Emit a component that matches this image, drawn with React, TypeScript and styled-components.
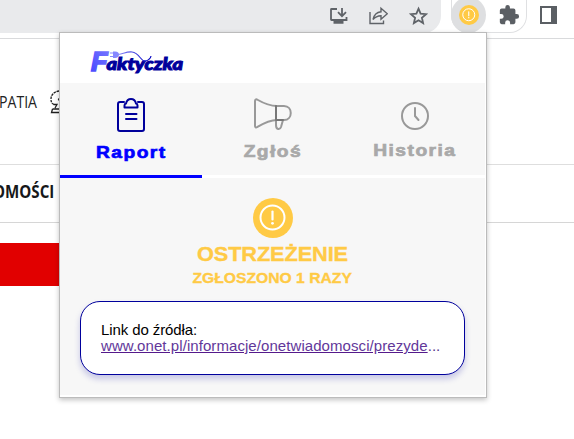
import React from "react";
import styled, { createGlobalStyle } from "styled-components";

const GlobalStyle = createGlobalStyle`
  *, *::before, *::after { box-sizing: border-box; }
  html, body { margin: 0; overflow: hidden; background: #fff; }
  body { font-family: "Liberation Sans", Arial, sans-serif; }
  svg { display: block; flex: none; }
`;

const Browser = styled.div`
  position: relative;
  width: 574px;
  height: 439px;
  overflow: hidden;
  background: #fff;
`;

const Toolbar = styled.header`
  display: flex;
  height: 39px;
  border-bottom: 1px solid #d9dadc;
`;

const AddressBar = styled.div`
  display: flex;
  align-items: flex-start;
  gap: 20px;
  width: 441px;
  height: 33px;
  padding: 6px 14px 0 328px;
  background: #e9eaec;
  border-bottom-right-radius: 17px;
`;

const Extensions = styled.div`
  display: flex;
  flex: none;
  width: 76px;
  height: 33px;
  margin-left: 10px;
  border: 1px solid #dfe0e2;
  border-top: 0;
  border-radius: 0 0 17px 17px;
`;

const ActiveExtension = styled.div`
  flex: none;
  width: 35px;
  height: 36px;
  margin: -3px 0 0 -1px;
  padding: 8px 0 0 7.5px;
  border-radius: 50%;
  background: #dedfe1;
`;

const PuzzleSlot = styled.div`
  padding: 4px 0 0 12px;
`;

const PanelToggle = styled.div`
  flex: none;
  width: 17px;
  height: 18px;
  margin: 6px 0 0 13px;
  border: 2px solid #5b5f64;
  border-right-width: 6px;
`;

const Page = styled.main`
  display: flex;
  flex-direction: column;
`;

const PageHeader = styled.div`
  display: flex;
  justify-content: space-between;
  width: 66px;
  height: 125px;
  padding-top: 51px;
`;

const PageLink = styled.span`
  margin-left: -1px;
  font: 400 17px/24px "Open Sans", sans-serif;
  color: #222;
  transform: scaleX(0.83);
  transform-origin: left;
`;

const PageNav = styled.nav`
  height: 59px;
  padding-top: 14px;
  border-top: 1px solid #dedede;
  border-bottom: 1px solid #d6d6d6;
`;

const NavLabel = styled.span`
  display: block;
  width: max-content;
  margin-left: -7px;
  font: 700 18px/24px "Open Sans", sans-serif;
  color: #17181a;
  transform: scaleX(0.84);
  transform-origin: left;
`;

const RedBanner = styled.div`
  height: 43px;
  width: 70px;
  margin-top: 20px;
  background: #e10000;
`;

const Popup = styled.section`
  position: absolute;
  left: 60px;
  top: 33px;
  width: 426px;
  height: 364px;
  background: #fff;
  box-shadow: 0 0 0 1px #bbb, 0 2px 5px 1px rgba(0, 0, 0, 0.24);
`;

const Brand = styled.div`
  height: 50px;
  padding: 10px 0 0 28px;
`;

const Tabs = styled.nav`
  display: grid;
  grid-template-columns: 142px 142px 141px;
  width: 425px;
  height: 95px;
  background: #f7f7f7;
`;

const Tab = styled.button<{ $active?: boolean; $pad: number; $gap: number }>`
  display: flex;
  flex-direction: column;
  align-items: center;
  gap: ${(p) => p.$gap}px;
  padding: ${(p) => p.$pad}px 0 0;
  border: 0;
  border-bottom: 3px solid ${(p) => (p.$active ? "#0000ff" : "#fff")};
  background: transparent;
  color: ${(p) => (p.$active ? "#0000ff" : "#a9a9a9")};
`;

const TabLabel = styled.span`
  font: 900 17px/20px "Liberation Sans", Arial, sans-serif;
  letter-spacing: 1.3px;
  transform: scaleX(1.13);
  -webkit-text-stroke: 0.7px currentColor;
`;

const Report = styled.div`
  display: flex;
  flex-direction: column;
  align-items: center;
  width: 425px;
  height: 217px;
  padding-top: 20px;
  background: #f7f7f7;
`;

const Verdict = styled.h1`
  margin: 4px 0 0;
  font: 700 20px/24px "Liberation Sans", Arial, sans-serif;
  letter-spacing: -0.1px;
  color: #ffca45;
  transform: scaleX(1.087);
  -webkit-text-stroke: 0.35px currentColor;
`;

const Count = styled.p`
  margin: 3px 0 0;
  font: 700 14px/18px "Liberation Sans", Arial, sans-serif;
  color: #ffca45;
  transform: scaleX(1.12);
  -webkit-text-stroke: 0.3px currentColor;
`;

const SourceCard = styled.div`
  width: 385px;
  height: 74px;
  margin-top: 14px;
  padding: 20px;
  border: 1px solid #00009c;
  border-radius: 20px;
  background: #fff;
  box-shadow: 0 4px 6px rgba(0, 0, 160, 0.2);
  font-size: 15px;
  line-height: 16px;
  color: #000;
`;

const SourceLabel = styled.div`
  letter-spacing: -0.1px;
`;

const SourceLink = styled.div`
  white-space: nowrap;
  letter-spacing: 0.07px;
  color: #56358c;
  a { color: #62379a; text-decoration: underline; text-decoration-color: #551a8b; }
`;

const AlertIcon = ({ size }: { size: number }) => (
  <svg width={size} height={size} viewBox="0 0 40 40" fill="none">
    <circle cx="20" cy="20" r="20" fill="#ffca45" />
    <circle cx="19.5" cy="19.5" r="12" stroke="#fff" strokeWidth="2" />
    <path d="M19.5 13.5v8" stroke="#fff" strokeWidth="2.2" strokeLinecap="round" />
    <circle cx="19.5" cy="25.3" r="1.4" fill="#fff" />
  </svg>
);

const InstallIcon = () => (
  <svg width="20" height="20" viewBox="0 0 20 20" fill="none" stroke="#5f6368" strokeWidth="1.8">
    <path d="M9 3H3.5Q3 3 3 3.5v10q0 .5.5.5h15v-3M14 2v8M10 6.2l4 4 4-4" />
    <path d="M5.5 16h10" strokeWidth="3.5" />
  </svg>
);

const ShareIcon = () => (
  <svg width="20" height="20" viewBox="0 0 20 20" fill="none" stroke="#5f6368" strokeWidth="1.4">
    <path d="M2 6v11.5h13.5v-3" />
    <path d="M5 13.5C6 9 8.5 6.3 13 5.8V2.3l6.3 5.5-6.3 5.5V9.8C9.5 10 7 11.2 5 13.5z" />
  </svg>
);

const StarIcon = () => (
  <svg width="20" height="20" viewBox="0 0 20 20" fill="none" stroke="#5f6368" strokeWidth="1.8">
    <path d="M10.5 2.7l2.1 5 5.4.5-4.1 3.6 1.2 5.3-4.6-2.8-4.6 2.8 1.2-5.3L3 8.2l5.4-.5z" />
  </svg>
);

const PuzzleIcon = () => (
  <svg width="22" height="22" viewBox="0 0 24 24" fill="#5b5f64">
    <path d="M20.5 11H19V7a2 2 0 0 0-2-2h-4V3.5a2.5 2.5 0 0 0-5 0V5H4a2 2 0 0 0-2 2v3.8h1.5a2.7 2.7 0 0 1 0 5.4H2V20a2 2 0 0 0 2 2h3.8v-1.5a2.7 2.7 0 0 1 5.4 0V22H17a2 2 0 0 0 2-2v-4h1.5a2.5 2.5 0 0 0 0-5z" />
  </svg>
);

const KnightIcon = () => (
  <svg width="17" height="24" viewBox="0 0 17 24" fill="none" stroke="#202020" strokeWidth="1.3">
    <path d="M3.5 19H15v3.5H2.5l1-3.5M6 18l2-3.5H4.5" />
    <path d="M10 1C5 1.500 2 5 2 9c0 3 1 5 3 5.500" strokeDasharray="2.500 .8" />
    <circle cx="10" cy="9.500" r=".5" />
  </svg>
);

const Logo = () => (
  <svg width="100" height="34" viewBox="0 0 100 34">
    <defs>
      <linearGradient id="initial" x1="0" y1="1" x2=".8" y2="0">
        <stop offset="0" stopColor="#4545ff" />
        <stop offset="1" stopColor="#7373ff" />
      </linearGradient>
      <linearGradient id="cord" x1="0" y1="0" x2="1" y2="0">
        <stop offset="0" stopColor="#9090ff" />
        <stop offset="1" stopColor="#0000c0" />
      </linearGradient>
    </defs>
    <text x="3" y="28" fontFamily="Liberation Sans" fontSize="27" fontWeight="700" fontStyle="italic" fill="url(#initial)" stroke="url(#initial)" strokeWidth="1.6" textLength="16.5" lengthAdjust="spacingAndGlyphs">F</text>
    <text x="18.500" y="27" fontFamily="Lato" fontSize="17.5" fontWeight="900" fontStyle="italic" fill="#00009c" stroke="#00009c" strokeWidth="1" textLength="76.5" lengthAdjust="spacingAndGlyphs">aktyczka</text>
    <path d="M29 11.500c5 0 9-3 15-2.500 8 .7 9 11 14 9 2.500-1 4.500-2.500 5-5" stroke="url(#cord)" fill="none" strokeWidth="1.200" />
    <path d="M25 8.500h2c3 0 4 1.500 4 3.300S29.500 15 27 15h-2z" fill="#8787ff" />
    <path d="M22 10h3M22 13.500h3" stroke="#8787ff" strokeWidth="1" />
  </svg>
);

const ClipboardIcon = () => (
  <svg width="28" height="34" viewBox="0 0 28 34" fill="none" stroke="#00009c" strokeWidth="2" strokeLinejoin="round" strokeLinecap="round">
    <path d="M7 4H3a2 2 0 0 0-2 2v25a2 2 0 0 0 2 2h22a2 2 0 0 0 2-2V6a2 2 0 0 0-2-2h-4" />
    <path d="M7.500 9.500h13V7.500a2 2 0 0 0-1.500-2C18.300 2.500 16.400 1 14 1S9.700 2.500 9 5.500a2 2 0 0 0-1.500 2zM9 16h10.500M9 21h10.500" />
  </svg>
);

const MegaphoneIcon = () => (
  <svg width="38" height="34" viewBox="0 0 38 34" fill="none" stroke="#999" strokeWidth="2" strokeLinejoin="round" strokeLinecap="round">
    <path d="M1 3v25c0 1.300 1 1.700 2 1.200 7-4.200 13-7.200 20-7.200h7c9 0 9-14 0-14h-7C16 8 10 5.500 3 1.500 2 1 1 1.700 1 3z" />
    <path d="M22 8v19c0 5 4 5 5 2l2-7" />
    <path d="M22 8v14M22 22h7" stroke="#777" />
  </svg>
);

const ClockIcon = () => (
  <svg width="28" height="28" viewBox="0 0 28 28" fill="none" stroke="#999" strokeWidth="2" strokeLinecap="round">
    <circle cx="14" cy="14" r="13" />
    <path d="M14 6v8l3.500 4" />
  </svg>
);

export default function App() {
  return (
    <Browser>
      <GlobalStyle />
      <Toolbar>
        <AddressBar>
          <InstallIcon />
          <ShareIcon />
          <StarIcon />
        </AddressBar>
        <Extensions>
          <ActiveExtension><AlertIcon size={20} /></ActiveExtension>
          <PuzzleSlot><PuzzleIcon /></PuzzleSlot>
        </Extensions>
        <PanelToggle />
      </Toolbar>
      <Page>
        <PageHeader>
          <PageLink>PATIA</PageLink>
          <KnightIcon />
        </PageHeader>
        <PageNav><NavLabel>OMOŚCI</NavLabel></PageNav>
        <RedBanner />
      </Page>
      <Popup>
        <Brand><Logo /></Brand>
        <Tabs>
          <Tab $active $pad={15} $gap={11}>
            <ClipboardIcon />
            <TabLabel>Raport</TabLabel>
          </Tab>
          <Tab $pad={15} $gap={10}>
            <MegaphoneIcon />
            <TabLabel>Zgłoś</TabLabel>
          </Tab>
          <Tab $pad={19} $gap={11}>
            <ClockIcon />
            <TabLabel>Historia</TabLabel>
          </Tab>
        </Tabs>
        <Report>
          <AlertIcon size={40} />
          <Verdict>OSTRZEŻENIE</Verdict>
          <Count>ZGŁOSZONO 1 RAZY</Count>
          <SourceCard>
            <SourceLabel>Link do źródła:</SourceLabel>
            <SourceLink><a>www.onet.pl/informacje/onetwiadomosci/prezyde</a>...</SourceLink>
          </SourceCard>
        </Report>
      </Popup>
    </Browser>
  );
}
